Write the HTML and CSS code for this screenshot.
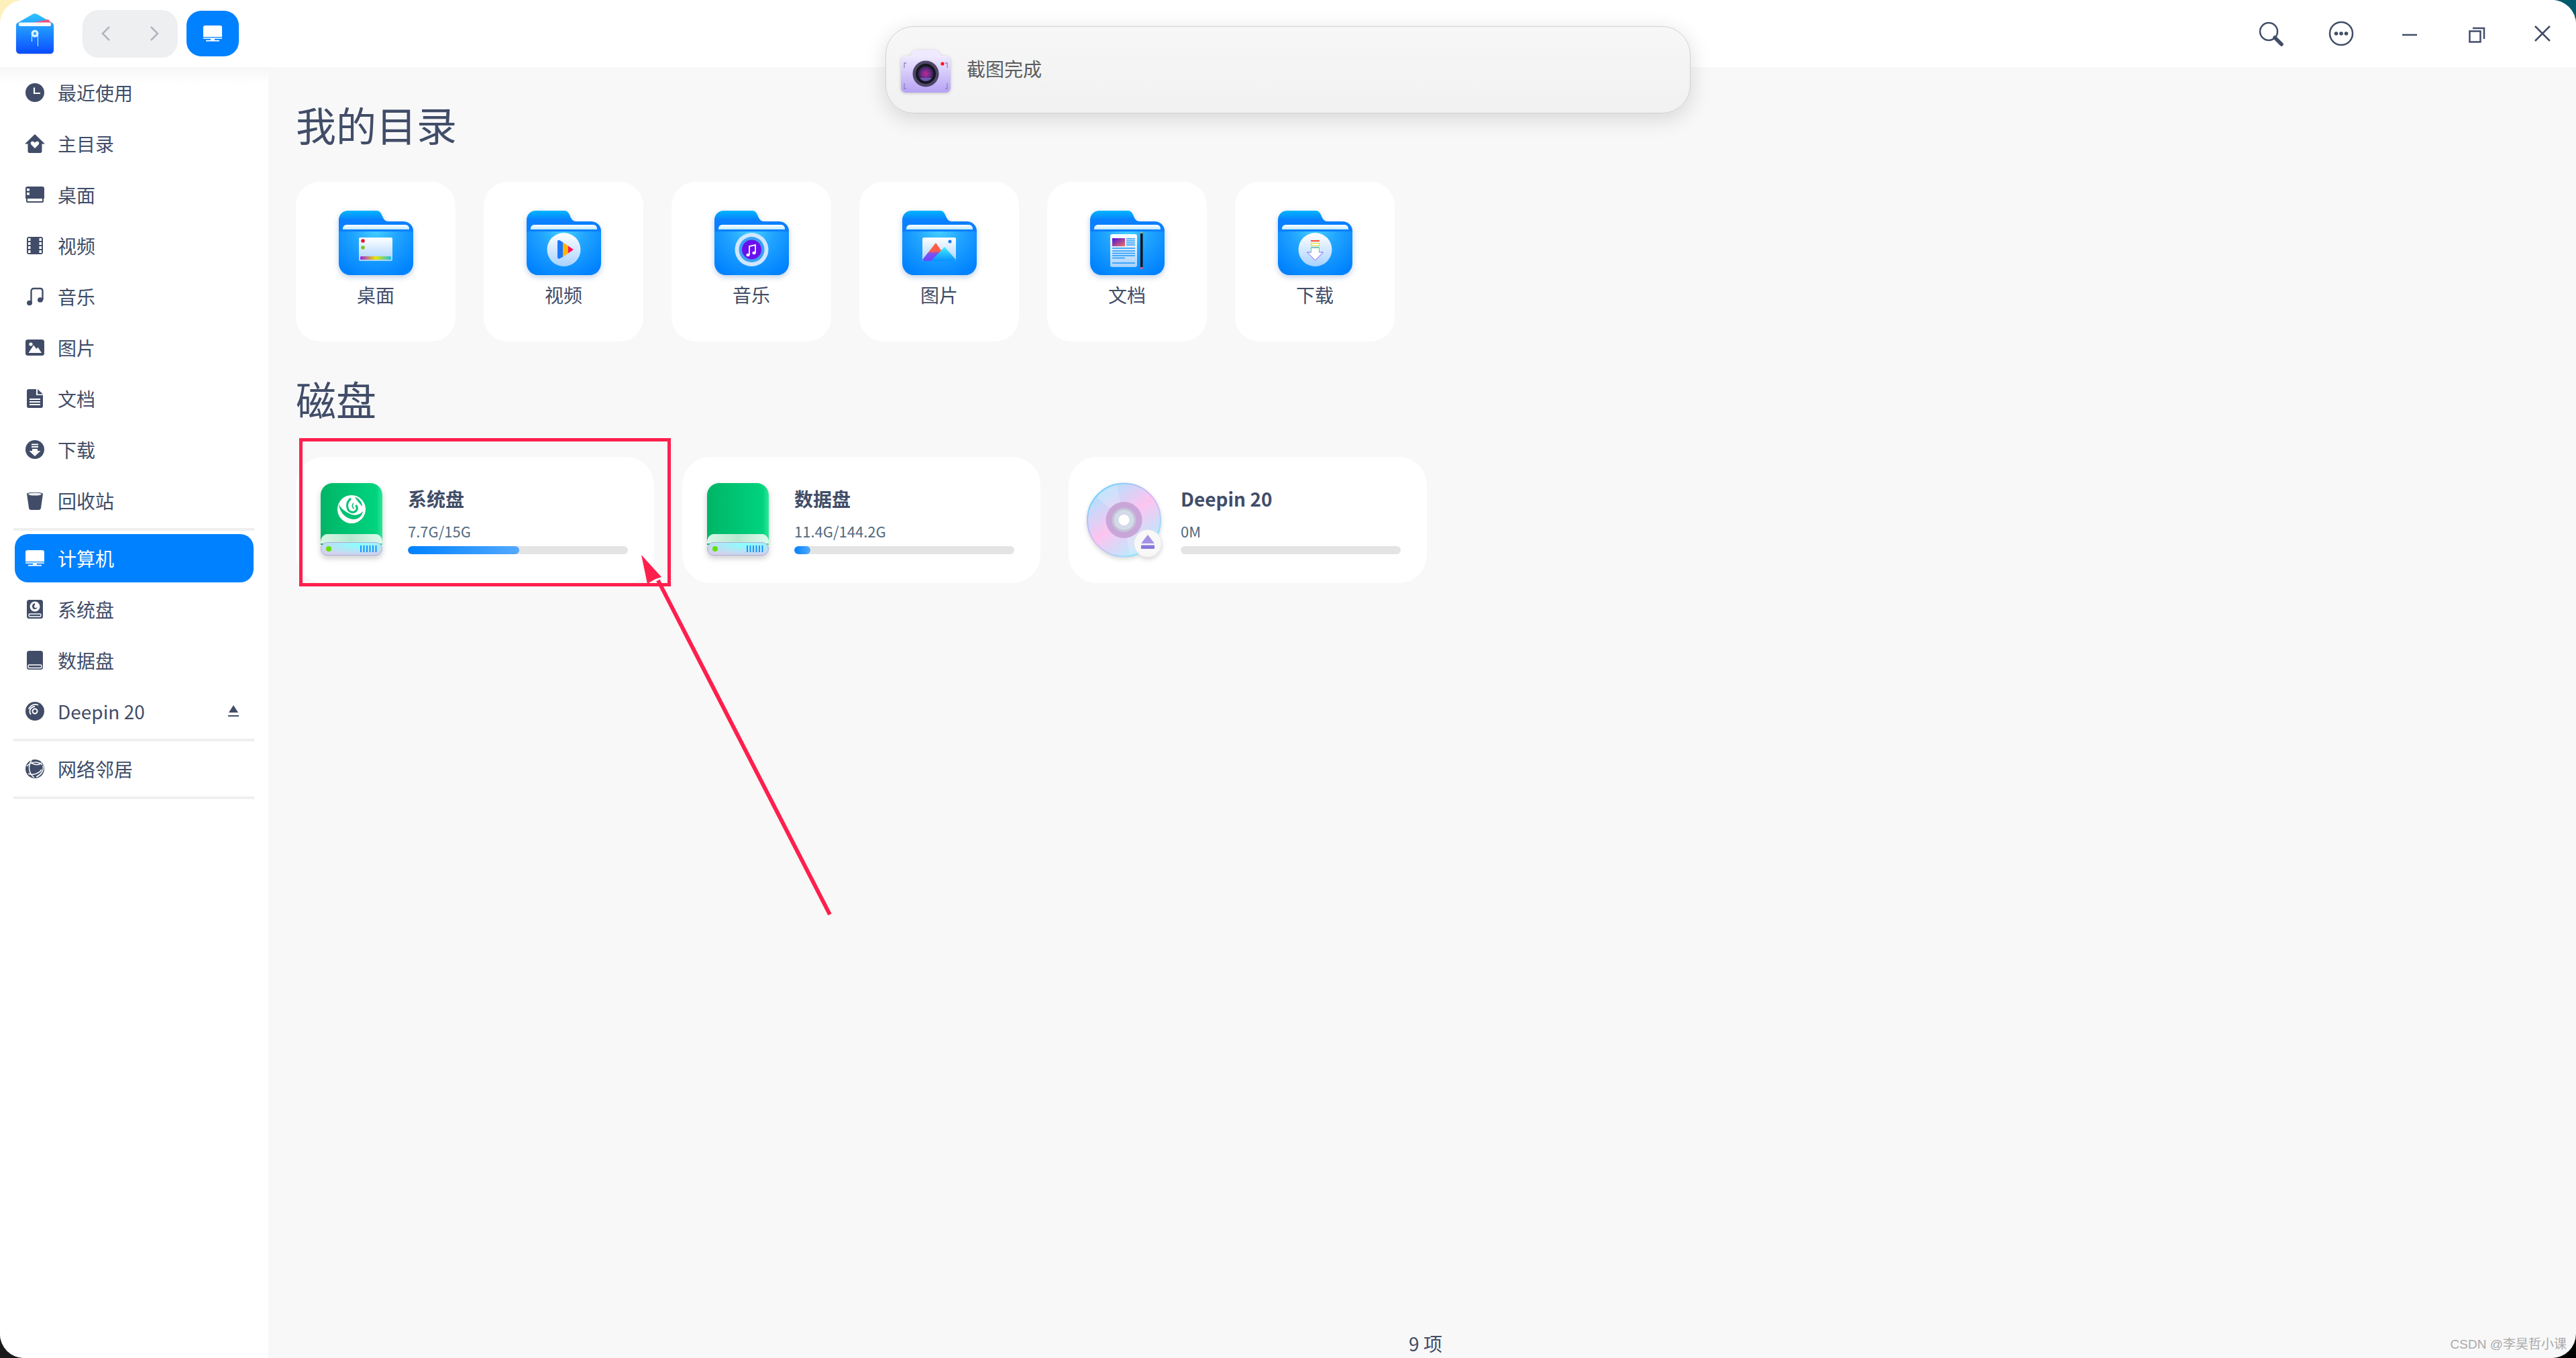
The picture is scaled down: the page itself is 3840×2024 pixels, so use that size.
FILE: index.html
```html
<!DOCTYPE html>
<html lang="zh-CN">
<head>
<meta charset="utf-8">
<title>计算机 - 文件管理器</title>
<link rel="stylesheet" href="styles.css">
</head>
<body>
<svg class="defs" width="0" height="0" aria-hidden="true">
  <defs>
    <linearGradient id="fBack" x1="0" y1="0" x2="0" y2="1"><stop offset="0" stop-color="#00b6ff"/><stop offset=".35" stop-color="#0a7fff"/></linearGradient>
    <linearGradient id="fPaper" x1="0" y1="0" x2="0" y2="1"><stop offset="0" stop-color="#fff"/><stop offset="1" stop-color="#bdeaff"/></linearGradient>
    <radialGradient id="fFront" gradientUnits="userSpaceOnUse" cx="55" cy="28" r="76"><stop offset="0" stop-color="#45d0ff"/><stop offset=".45" stop-color="#20a4ff"/><stop offset="1" stop-color="#0082ff"/></radialGradient>
    <linearGradient id="bubble" x1="0" y1="0" x2="0" y2="1"><stop offset="0" stop-color="#fff"/><stop offset="1" stop-color="#a8d2ff"/></linearGradient>
    <linearGradient id="rainbow"><stop offset="0" stop-color="#a020e8"/><stop offset=".5" stop-color="#e8e800"/><stop offset="1" stop-color="#18c0e8"/></linearGradient>
    <linearGradient id="mtnA" x1="0" y1="0" x2="0" y2="1"><stop offset="0" stop-color="#ff5c3a"/><stop offset=".45" stop-color="#ff5c50"/><stop offset=".6" stop-color="#7a50f0"/><stop offset="1" stop-color="#6a48ff"/></linearGradient>
    <linearGradient id="mtnB" x1="0" y1="0" x2="0" y2="1"><stop offset="0" stop-color="#3ff0ff"/><stop offset="1" stop-color="#0a90ff"/></linearGradient>
    <linearGradient id="thumb" x1="0" y1="0" x2="1" y2="1"><stop offset="0" stop-color="#4a10e0"/><stop offset="1" stop-color="#f07060"/></linearGradient>
    <linearGradient id="dGreen"><stop offset="0" stop-color="#00b566"/><stop offset=".9" stop-color="#00d37f"/><stop offset="1" stop-color="#2ee895"/></linearGradient>
    <linearGradient id="dBand"><stop offset="0" stop-color="#d8f6e6"/><stop offset=".5" stop-color="#b8e8d0"/><stop offset="1" stop-color="#dcfaee"/></linearGradient>
    <radialGradient id="dFront" cx=".62" cy=".2" r=".8"><stop offset="0" stop-color="#88ffff"/><stop offset="1" stop-color="#d6d0ec"/></radialGradient>
    <linearGradient id="disc" x1=".15" y1=".05" x2=".8" y2=".95"><stop offset="0" stop-color="#a8e4ff"/><stop offset=".5" stop-color="#fdc4f0"/><stop offset="1" stop-color="#b0efff"/></linearGradient>
    <linearGradient id="discEdge" x1=".1" y1="0" x2=".9" y2="1"><stop offset="0" stop-color="#5fd8ff"/><stop offset=".5" stop-color="#e0b8f4"/><stop offset="1" stop-color="#70f0ff"/></linearGradient>
    <linearGradient id="cam" x1="0" y1="0" x2="0" y2="1"><stop offset="0" stop-color="#f0ebff"/><stop offset="1" stop-color="#b6a2f4"/></linearGradient>
    <radialGradient id="lens"><stop offset="0" stop-color="#c02a90"/><stop offset=".6" stop-color="#6a2a8a"/><stop offset="1" stop-color="#2a2440"/></radialGradient>
    <linearGradient id="app" x1="0" y1="0" x2="0" y2="1"><stop offset="0" stop-color="#2ec4ff"/><stop offset="1" stop-color="#0a4cff"/></linearGradient>

    <symbol id="folder" viewBox="0 0 111 96">
      <path fill="url(#fBack)" d="M0 30V14C0 6 6 0 14 0H56C60 0 62 2 64 6C66 11 68 16 74 16H96C104 16 111 22 111 30V40H0Z"/>
      <path fill="url(#fPaper)" d="M6 28V27C6 23 9 21 12 21H99C102 21 105 23 105 27V28Z"/>
      <path fill="url(#fFront)" d="M0 31H111V78C111 88 104 96 94 96H17C7 96 0 88 0 78Z"/>
    </symbol>
    <symbol id="drive" viewBox="0 0 92 108">
      <path fill="url(#dGreen)" d="M0 18C0 8 8 0 18 0H74C84 0 92 8 92 18V92H0Z"/>
      <path fill="url(#dBand)" d="M0 90V88C0 82 4 76 10 76H82C88 76 92 82 92 88V90Z"/>
      <rect x=".5" y="88.500" width="91" height="19" rx="9.500" fill="url(#dFront)" stroke="#aab0dc"/>
      <circle cx="12" cy="98" r="4" fill="#66e000"/>
      <path stroke="#0a8cff" stroke-width="1.800" d="M60 93v10M64.500 93v10M69 93v10M73.500 93v10M78 93v10M82.500 93v10" fill="none"/>
    </symbol>
    <symbol id="i-computer" viewBox="0 0 28 24"><path d="M3 0H25C27 0 28 1 28 3V17H0V3C0 1 1 0 3 0Z"/><rect y="18.200" width="28" height="1.600"/><rect x="11" y="19.800" width="6" height="2"/><rect x="4" y="21.800" width="20" height="1.800"/></symbol>
  </defs>
</svg>

<div class="window">
  <header class="titlebar">
    <svg class="app-icon" viewBox="0 0 56 60">
      <path fill="url(#app)" d="M0 18C0 15 2 14 4 13L25 1C27 0 29 0 31 1L52 13C54 14 56 15 56 18V54C56 58 54 60 50 60H6C2 60 0 58 0 54Z"/>
      <path fill="#f0507a" d="M4 18L48 9L52 14V19H4Z"/>
      <rect x="4" y="13.500" width="48" height="5.500" rx="2" fill="#f4fbff"/>
      <circle cx="28" cy="30" r="5.500" fill="#d8f4ff"/><circle cx="28" cy="30" r="2.200" fill="#35a8f0"/>
      <path d="M23.500 31V42M32.500 31V49" stroke="#d8f4ff" stroke-width="1" fill="none"/>
    </svg>
    <div class="nav-group">
      <svg class="chevron" viewBox="0 0 14 24"><path d="M12 2L2 12L12 22"/></svg>
      <svg class="chevron" viewBox="0 0 14 24"><path d="M2 2L12 12L2 22"/></svg>
    </div>
    <div class="crumb">
      <svg class="icon28" viewBox="0 0 28 24"><use href="#i-computer"/></svg>
    </div>
    <div class="win-controls">
      <span class="ctrl wide"><svg class="ctrl-svg" viewBox="0 0 48 48"><circle cx="22" cy="21" r="13" class="line"/><path d="M31 30L41 40" class="thick"/></svg></span>
      <span class="ctrl wide"><svg class="ctrl-svg" viewBox="0 0 48 48"><circle cx="26" cy="24" r="17" class="line"/><circle cx="18.500" cy="24" r="2.800" class="dot"/><circle cx="26" cy="24" r="2.800" class="dot"/><circle cx="33.500" cy="24" r="2.800" class="dot"/></svg></span>
      <span class="ctrl"><svg class="ctrl-svg" viewBox="0 0 48 48"><path d="M15 26H37" class="line"/></svg></span>
      <span class="ctrl"><svg class="ctrl-svg" viewBox="0 0 48 48"><rect x="15.500" y="20.500" width="16" height="16" class="line"/><path d="M20 16H37V32" class="line"/></svg></span>
      <span class="ctrl"><svg class="ctrl-svg" viewBox="0 0 48 48"><path d="M13 13L35 35M35 13L13 35" class="line"/></svg></span>
    </div>
  </header>

  <div class="content">
    <nav class="sidebar">
      <a class="side-row"><svg class="icon28" viewBox="0 0 28 28"><circle cx="14" cy="14" r="14"/><path d="M13 6.500V15H22" fill="none" stroke="#fff" stroke-width="2.200"/></svg><span>最近使用</span></a>
      <a class="side-row"><svg class="icon28" viewBox="0 0 28 28"><path d="M14 0L29 14.500H24.500V25.500C24.500 27 23.500 28 22 28H6C4.500 28 3.500 27 3.500 25.500V14.500H-1Z"/><path fill="#fff" d="M14 21L8.500 15.500C6.800 13.500 8 10.800 10.500 10.800C12 10.800 13.300 11.600 14 13C14.700 11.600 16 10.800 17.500 10.800C20 10.800 21.200 13.500 19.500 15.500Z"/></svg><span>主目录</span></a>
      <a class="side-row"><svg class="icon28 tall" viewBox="0 0 28 24"><path d="M3 0H25C27 0 28 1 28 3V16H0V3C0 1 1 0 3 0Z"/><path d="M2 16.500H26V22C26 22.500 25.500 23 25 23H3C2.500 23 2 22.500 2 22Z" fill="none" stroke="#414d68" stroke-width="2"/><rect x="2" y="3" width="4" height="3.500" fill="#fff"/><rect x="2" y="9" width="4" height="3.500" fill="#fff"/><rect y="16" width="28" height="2"/></svg><span>桌面</span></a>
      <a class="side-row"><svg class="icon28" viewBox="0 0 28 28"><rect x="2" y="1" width="24" height="26" rx="3"/><g fill="#fff"><rect x="4" y="3" width="3.500" height="4"/><rect x="4" y="9" width="3.500" height="4"/><rect x="4" y="15" width="3.500" height="4"/><rect x="4" y="21" width="3.500" height="4"/><rect x="20.500" y="3" width="3.500" height="4"/><rect x="20.500" y="9" width="3.500" height="4"/><rect x="20.500" y="15" width="3.500" height="4"/><rect x="20.500" y="21" width="3.500" height="4"/></g></svg><span>视频</span></a>
      <a class="side-row"><svg class="icon28" viewBox="0 0 28 28"><ellipse cx="6" cy="23.500" rx="4" ry="3.800"/><ellipse cx="22" cy="19" rx="4" ry="3.800"/><path d="M8.500 23V6C8.500 3.500 10 2 12.500 2H22C24.500 2 25.500 3 25.500 5.500V19" fill="none" stroke="#414d68" stroke-width="2.400"/></svg><span>音乐</span></a>
      <a class="side-row"><svg class="icon28 tall" viewBox="0 0 28 24"><rect width="28" height="24" rx="3.500"/><circle cx="8" cy="7" r="2.600" fill="#fff"/><path d="M4.500 20L12 8.500L16.500 14L18.500 11.500L24 20Z" fill="#fff"/></svg><span>图片</span></a>
      <a class="side-row"><svg class="icon28" viewBox="0 0 28 28"><path d="M4.500 0H16V9H26V25C26 27 25 28 23.500 28H4.500C3 28 2 27 2 25V3C2 1 3 0 4.500 0Z"/><path d="M18 0L26 7.500H18Z"/><path d="M6 15H22M6 19H22M6 23H22" stroke="#fff" stroke-width="1.800"/></svg><span>文档</span></a>
      <a class="side-row"><svg class="icon28" viewBox="0 0 28 28"><circle cx="14" cy="14" r="14"/><path d="M9 6.500H19M9 10H19" stroke="#fff" stroke-width="2"/><path d="M10 13H18V16H22.500L14 24L5.500 16H10Z" fill="#fff"/></svg><span>下载</span></a>
      <a class="side-row"><svg class="icon28" viewBox="0 0 28 28"><path d="M2 4C2 1 26 1 26 4L23 25C23 27 21 28 20 28H8C7 28 5 27 5 25Z"/><ellipse cx="14" cy="4.500" rx="10" ry="2" fill="#eef0f4"/></svg><span>回收站</span></a>
      <div class="side-sep"></div>
      <a class="side-row active"><svg class="icon28" viewBox="0 0 28 24"><use href="#i-computer"/></svg><span>计算机</span></a>
      <a class="side-row"><svg class="icon28" viewBox="0 0 28 28"><rect x="2" width="24" height="28" rx="3.500"/><circle cx="14" cy="10" r="7.500" fill="#fff"/><path d="M14 5C10 6 9 9 11 13C13 15 17 14 18 11C16 13 13 12 13 10C13 8 15 7 14 5Z"/><rect x="5" y="21" width="18" height="4" rx="1.500" fill="none" stroke="#fff" stroke-width="1.400"/></svg><span>系统盘</span></a>
      <a class="side-row"><svg class="icon28" viewBox="0 0 28 28"><rect x="2" width="24" height="28" rx="3.500"/><rect x="4" y="21" width="20" height="4.500" rx="1.500" fill="none" stroke="#fff" stroke-width="1.400"/></svg><span>数据盘</span></a>
      <a class="side-row with-eject"><svg class="icon28" viewBox="0 0 28 28"><circle cx="14" cy="14" r="14"/><circle cx="14" cy="14" r="3.500" fill="none" stroke="#fff" stroke-width="2"/><path d="M14 7A7.500 7.500 0 0 0 8 19M5 11A10 10 0 0 1 19 5" fill="none" stroke="#fff" stroke-width="1.800"/></svg><span>Deepin 20</span><svg class="eject" viewBox="0 0 16 18"><path d="M8 0L15 11H1Z"/><rect y="15" width="16" height="2"/></svg></a>
      <div class="side-sep"></div>
      <a class="side-row"><svg class="icon28" viewBox="0 0 28 28"><circle cx="14" cy="14" r="14"/><path d="M2 10C8 3 18 2 25 8M9 1C3 10 5 21 13 27M26 9C28 16 23 23 16 26M4 21C11 24 20 21 24 15M8 5C14 8 20 9 24 5" fill="none" stroke="#fff" stroke-width="1.500"/></svg><span>网络邻居</span></a>
      <div class="side-sep"></div>
    </nav>

    <main class="main">
      <h2 class="section-title">我的目录</h2>
      <section class="folder-grid">
        <article class="folder-card">
          <svg class="folder-icon" viewBox="0 0 111 96"><use href="#folder" width="111" height="96"/>
            <rect x="30" y="40" width="50" height="35" rx="2" fill="url(#bubble)"/><circle cx="36" cy="45" r="2.800" fill="#e01838"/><circle cx="36" cy="55" r="2.800" fill="#80c020"/><rect x="32" y="68" width="46" height="5" rx="1.500" fill="url(#rainbow)"/>
          </svg>
          <span class="folder-name">桌面</span>
        </article>
        <article class="folder-card">
          <svg class="folder-icon" viewBox="0 0 111 96"><use href="#folder" width="111" height="96"/>
            <circle cx="55.500" cy="58" r="25" fill="url(#bubble)"/><path d="M46 46C46 44 47 44 49 44L54 47V69L49 71.500C47 72 46 71 46 69Z" fill="#1a78ff"/><path d="M54 47L62 52.500V63.500L54 69Z" fill="#ffb400"/><path d="M62 52.500L70 58L62 63.500Z" fill="#ff1060"/>
          </svg>
          <span class="folder-name">视频</span>
        </article>
        <article class="folder-card">
          <svg class="folder-icon" viewBox="0 0 111 96"><use href="#folder" width="111" height="96"/>
            <circle cx="55.500" cy="58" r="25" fill="#cfe6ff"/><circle cx="55.500" cy="58" r="19" fill="#3aa0f4"/><circle cx="55.500" cy="58" r="14.500" fill="#6a10f0"/><path d="M52 66V53L61 51V63" fill="none" stroke="#fff" stroke-width="1.800"/><ellipse cx="50" cy="66" rx="2.600" ry="2.200" fill="#fff"/><ellipse cx="59" cy="63" rx="2.600" ry="2.200" fill="#fff"/>
          </svg>
          <span class="folder-name">音乐</span>
        </article>
        <article class="folder-card">
          <svg class="folder-icon" viewBox="0 0 111 96"><use href="#folder" width="111" height="96"/>
            <rect x="30" y="40" width="50" height="35" rx="2" fill="url(#bubble)"/><circle cx="71" cy="46" r="2.500" fill="#1a78ff"/><path d="M30 73L50 48L60 62L50 75H32Z" fill="url(#mtnA)"/><path d="M43 75L63 54L80 73L78 75Z" fill="url(#mtnB)"/>
          </svg>
          <span class="folder-name">图片</span>
        </article>
        <article class="folder-card">
          <svg class="folder-icon" viewBox="0 0 111 96"><use href="#folder" width="111" height="96"/>
            <rect x="30" y="35" width="40" height="49" rx="3" fill="url(#bubble)"/><rect x="33" y="41" width="19" height="12" fill="url(#thumb)"/><path d="M54 42H67M54 45H67M54 48H67M54 51H67M33 56H67M33 60H67M33 63.500H67M33 67H67M33 70.500H52M33 78H67" stroke="#1a96f8" stroke-width="1.500" fill="none"/><rect x="75" y="34" width="3.500" height="50" fill="#111"/><path d="M75 34L76.800 30L78.500 34Z" fill="#e0a040"/><rect x="75" y="84" width="3.500" height="3" fill="#f05080"/>
          </svg>
          <span class="folder-name">文档</span>
        </article>
        <article class="folder-card">
          <svg class="folder-icon" viewBox="0 0 111 96"><use href="#folder" width="111" height="96"/>
            <circle cx="55.500" cy="58" r="25" fill="url(#bubble)"/><rect x="49" y="44" width="13" height="2" fill="#ff5030"/><rect x="49.500" y="48.500" width="12" height="3.500" fill="#fff" stroke="#dcdc10"/><path d="M49.500 55H61.500V62H67.500L55.500 74L43.500 62H49.500Z" fill="#fff" stroke="#7a5af0"/><path d="M49.500 62V55H61.500V62" fill="none" stroke="#50d880"/>
          </svg>
          <span class="folder-name">下载</span>
        </article>
      </section>

      <h2 class="section-title disks-title">磁盘</h2>
      <section class="disk-grid">
        <article class="disk-card">
          <div class="disk-slot"><svg class="drive-icon" viewBox="0 0 92 108"><use href="#drive" width="92" height="108"/>
            <circle cx="46" cy="39" r="21" fill="#fff"/>
            <path d="M27 31C28 44 38 54 50 54C56 54 62 49 63 42C58 48 50 49 44 46C36 42 30 38 27 31Z" fill="#00c274"/>
            <path d="M45 23C37 29 38 42 47 43.500C53 44 56.500 38 52.500 33" fill="none" stroke="#00c274" stroke-width="3"/>
            <path d="M49 30C46 33 47 37 50 38" fill="none" stroke="#00c274" stroke-width="1.600"/>
            <path d="M51 20.500C57 23 62 28 62 35C58 30 54 26 51 20.500Z" fill="#00c274"/>
          </svg></div>
          <div class="disk-info">
            <div class="disk-name">系统盘</div>
            <div class="disk-size">7.7G/15G</div>
            <div class="bar"><div class="bar-fill" style="width:166px"></div></div>
          </div>
        </article>
        <article class="disk-card">
          <div class="disk-slot"><svg class="drive-icon" viewBox="0 0 92 108"><use href="#drive" width="92" height="108"/></svg></div>
          <div class="disk-info">
            <div class="disk-name">数据盘</div>
            <div class="disk-size">11.4G/144.2G</div>
            <div class="bar"><div class="bar-fill" style="width:24px"></div></div>
          </div>
        </article>
        <article class="disk-card">
          <div class="disk-slot"><svg class="disc-icon" viewBox="0 0 112 112">
            <circle cx="55.500" cy="56" r="54.500" fill="url(#disc)" stroke="url(#discEdge)" stroke-width="2"/>
            <path d="M55.500 56L15 22A54 54 0 0 1 45 4Z" fill="#fff" opacity=".2"/><path d="M55.500 56L64 108L88 100Z" fill="#fff" opacity=".2"/>
            <circle cx="55.500" cy="56" r="27" fill="#c9a6d8"/><circle cx="55.500" cy="56" r="18" fill="#c4c4d6"/><circle cx="55.500" cy="56" r="15" fill="#d4dbe8"/><circle cx="55.500" cy="56" r="8" fill="#fff"/>
            <circle cx="91" cy="91" r="20.500" fill="#f8f8f8" stroke="#e4e4e8"/>
            <path d="M91 78L101 91H81Z" fill="#a592e4"/><rect x="81" y="93.500" width="20" height="5.500" fill="#8878dc"/>
          </svg></div>
          <div class="disk-info">
            <div class="disk-name">Deepin 20</div>
            <div class="disk-size">0M</div>
            <div class="bar"></div>
          </div>
        </article>
      </section>

      <footer class="status">9 项</footer>
    </main>
  </div>
</div>

<aside class="toast">
  <svg class="camera" viewBox="0 0 74 64">
    <path d="M14 12C15 5 18 0 24 0H50C56 0 59 5 60 12Z" fill="#efeaff"/>
    <rect y="9" width="74" height="55" rx="7" fill="url(#cam)"/>
    <path d="M8 20H5V27M66 20H69V27M8 58H5V50M66 58H69V50" fill="none" stroke="#8d80b8" stroke-width="1.300"/>
    <circle cx="37" cy="36" r="19.500" fill="#4c4866"/><circle cx="37" cy="36" r="15" fill="#16141f"/><circle cx="37" cy="36" r="11.500" fill="url(#lens)"/><path d="M28 42A11 11 0 0 0 46 42Z" fill="#6a5ab0"/>
    <circle cx="62" cy="21" r="2.600" fill="#ff1010"/>
  </svg>
  <span class="toast-text">截图完成</span>
</aside>

<div class="annotation-box"></div>
<svg class="annotation-arrow" viewBox="0 0 300 550">
  <path d="M287 543L31 45" fill="none" stroke="#ff1f4d" stroke-width="6"/>
  <path d="M6 7L36 40L27 43L15 50Z" fill="#ff1f4d"/>
</svg>
<div class="watermark">CSDN @李昊哲小课</div>
</body>
</html>
```

FILE: styles.css
```css
* { box-sizing: border-box; }

html, body {
  margin: 0;
  height: 2024px;
  overflow: hidden;
}

body {
  position: relative;
  font-family: "Noto Sans CJK SC", "Noto Sans", sans-serif;
  color: #414d68;
  background:
    linear-gradient(#fdf0ba, #fdf0ba) 0 0 / 60px 60px no-repeat,
    linear-gradient(#005a6e, #005a6e) 100% 0 / 60px 60px no-repeat,
    linear-gradient(#1a1a1a, #1a1a1a) 0 100% / 60px 60px no-repeat,
    linear-gradient(#000, #000) 100% 100% / 60px 60px no-repeat,
    #fff;
}

.defs { position: absolute; }

.window {
  height: 2024px;
  border-radius: 36px;
  overflow: hidden;
  display: flex;
  flex-direction: column;
  background: #f8f8f8;
}

/* title bar */
.titlebar {
  height: 100px;
  flex: none;
  display: flex;
  align-items: center;
  background: #fff;
  padding-left: 24px;
}
.app-icon { width: 56px; height: 60px; flex: none; filter: drop-shadow(0 1px 1px rgba(0,0,0,.15)); }
.nav-group {
  width: 142px;
  height: 71px;
  margin-left: 43px;
  border-radius: 24px;
  background: #eeeff1;
  display: flex;
  align-items: center;
  justify-content: space-between;
  padding: 0 28px;
}
.chevron { width: 14px; height: 24px; fill: none; stroke: #b0b4be; stroke-width: 2.500; }
.crumb {
  width: 78px;
  height: 68px;
  margin-left: 13px;
  border-radius: 22px;
  background: #0081ff;
  display: flex;
  align-items: center;
  justify-content: center;
}
.crumb .icon28 { fill: #fff; height: 24px; }
.win-controls { margin-left: auto; display: flex; }
.ctrl { width: 100px; height: 100px; display: flex; align-items: center; justify-content: center; }
.ctrl.wide { width: 104px; }
.ctrl-svg { width: 48px; height: 48px; }
.ctrl-svg .line { fill: none; stroke: #414d68; stroke-width: 2.500; }
.ctrl-svg .thick { fill: none; stroke: #414d68; stroke-width: 5.500; stroke-linecap: round; }
.ctrl-svg .dot { fill: #414d68; }

/* layout */
.content { flex: 1; display: flex; min-height: 0; }

.sidebar {
  width: 400px;
  flex: none;
  display: flex;
  flex-direction: column;
  background: linear-gradient(#f7f7f7, #fff 26px);
}
.side-row {
  height: 76px;
  flex: none;
  display: flex;
  align-items: center;
  gap: 20px;
  padding-left: 38px;
  font-size: 28px;
  line-height: 40px;
  color: #414d68;
}
.side-row.active {
  height: 72px;
  margin: 2px 22px 2px;
  padding-left: 16px;
  border-radius: 20px;
  background: #0081ff;
  color: #fff;
}
.side-row.with-eject { padding-right: 44px; }
.icon28 { width: 28px; height: 28px; flex: none; fill: #414d68; overflow: visible; }
.icon28.tall { height: 24px; }
.active .icon28 { fill: #fff; height: 24px; }
.eject { width: 16px; height: 18px; margin-left: auto; fill: #414d68; }
.side-sep {
  height: 4px;
  flex: none;
  margin: 3px 21px 3px 20px;
  background: #efefef;
}

/* main */
.main {
  flex: 1;
  display: flex;
  flex-direction: column;
  padding: 45px 0 0 41px;
  min-width: 0;
}
.section-title {
  margin: 0 0 46px;
  font-size: 60px;
  font-weight: 400;
  line-height: 80px;
  color: #414d68;
}
.section-title.disks-title { margin: 45px 0 47px; }

.folder-grid { display: flex; gap: 42px; }
.folder-card {
  width: 238px;
  height: 238px;
  padding-top: 43px;
  border-radius: 36px;
  background: #fff;
  display: flex;
  flex-direction: column;
  align-items: center;
}
.folder-icon { width: 111px; height: 96px; filter: drop-shadow(0 3px 4px rgba(0,60,140,.25)); }
.folder-name { margin-top: 9px; font-size: 28px; line-height: 40px; color: #414d68; }

.disk-grid { display: flex; gap: 42px; }
.disk-card {
  width: 534px;
  height: 188px;
  padding-left: 18px;
  border-radius: 42px;
  background: #fff;
  display: flex;
  gap: 19px;
}
.disk-slot { width: 130px; flex: none; display: flex; align-items: center; justify-content: center; }
.drive-icon { width: 92px; height: 108px; margin-top: -2px; filter: drop-shadow(0 4px 4px rgba(0,0,0,.2)); }
.disc-icon { width: 112px; height: 112px; filter: drop-shadow(0 3px 3px rgba(0,0,0,.15)); }
.disk-info { padding-top: 42px; }
.disk-name { font-size: 28px; font-weight: 700; line-height: 40px; color: #414d68; }
.disk-size { margin-top: 13px; font-size: 22px; line-height: 30px; color: #526a7f; }
.bar { width: 328px; height: 12px; margin-top: 8px; border-radius: 6px; background: #e4e4e4; overflow: hidden; }
.bar-fill { height: 12px; border-radius: 6px; background: linear-gradient(90deg, #0081ff, #53a9ff); }

.status {
  margin-top: auto;
  height: 46px;
  padding: 4px 31px 0 0;
  text-align: center;
  font-size: 28px;
  line-height: 40px;
  color: #414d68;
}

/* overlays */
.toast {
  position: absolute;
  left: 1320px;
  top: 39px;
  width: 1200px;
  height: 130px;
  padding-left: 22px;
  border-radius: 42px;
  border: 1px solid #d2d2d2;
  background: linear-gradient(#f7f7f7, #f1f1f1);
  box-shadow: 0 8px 32px rgba(0,0,0,.14);
  display: flex;
  align-items: center;
  gap: 24px;
}
.camera { width: 74px; height: 64px; flex: none; margin-top: 4px; filter: drop-shadow(0 1px 2px rgba(0,0,0,.2)); }
.toast-text { font-size: 28px; line-height: 40px; color: #5c5c5c; padding-bottom: 4px; }

.annotation-box {
  position: absolute;
  left: 446px;
  top: 653px;
  width: 554px;
  height: 221px;
  border: 5px solid #ff1f4d;
}
.annotation-arrow {
  position: absolute;
  left: 950px;
  top: 820px;
  width: 300px;
  height: 550px;
}
.watermark {
  position: absolute;
  right: 14px;
  bottom: 6px;
  font-family: "Liberation Sans", "Noto Sans CJK SC", sans-serif;
  font-size: 19px;
  line-height: 28px;
  color: #aaa;
}
```
